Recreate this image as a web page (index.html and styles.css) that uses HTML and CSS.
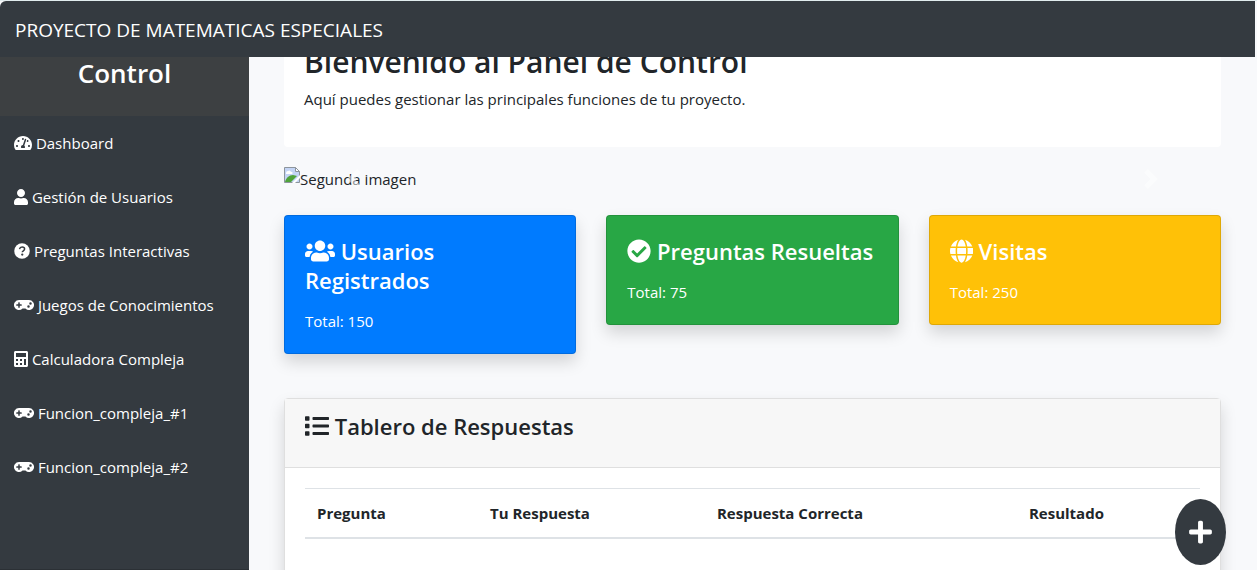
FILE: index.html
```
<!DOCTYPE html>
<html lang="es">
<head>
<meta charset="utf-8">
<title>Proyecto de Matematicas Especiales</title>
<link rel="stylesheet" href="styles.css">
</head>
<body>
<svg class="symbols" aria-hidden="true">
  <symbol id="gamepad" viewBox="0 0 640 512"><path fill-rule="evenodd" d="M480.070 96H160a160 160 0 1 0 114.240 272h91.500A160 160 0 1 0 480.070 96zM248 268a12 12 0 0 1-12 12h-52v52a12 12 0 0 1-12 12h-24a12 12 0 0 1-12-12v-52H84a12 12 0 0 1-12-12v-24a12 12 0 0 1 12-12h52v-52a12 12 0 0 1 12-12h24a12 12 0 0 1 12 12v52h52a12 12 0 0 1 12 12zm216 76a40 40 0 1 1 40-40 40 40 0 0 1-40 40zm64-96a40 40 0 1 1 40-40 40 40 0 0 1-40 40z"/></symbol>
</svg>
<div class="page">
  <header class="topbar"><a class="brand" href="#">PROYECTO DE MATEMATICAS ESPECIALES</a></header>
  <div class="layout">
    <aside class="sidebar">
      <h3 class="sidebar-title">Control</h3>
      <nav class="menu">
        <a href="#"><svg class="icon" viewBox="0 0 576 512"><path fill-rule="evenodd" d="M288 32C128.940 32 0 160.940 0 320c0 52.800 14.250 102.260 39.060 144.800 5.610 9.620 16.300 15.200 27.440 15.200h443c11.140 0 21.830-5.580 27.440-15.200C561.750 422.260 576 372.800 576 320c0-159.060-128.940-288-288-288zm0 64c14.710 0 26.580 10.130 30.320 23.650-1.110 2.260-2.640 4.230-3.450 6.670l-9.220 27.670c-5.130 3.490-10.970 6.010-17.640 6.010-17.670 0-32-14.330-32-32S270.330 96 288 96zM96 384c-17.670 0-32-14.330-32-32s14.330-32 32-32 32 14.330 32 32-14.330 32-32 32zm48-160c-17.670 0-32-14.330-32-32s14.330-32 32-32 32 14.330 32 32-14.330 32-32 32zm246.770-72.410l-61.330 184C343.130 347.330 352 364.540 352 384c0 11.720-3.380 22.550-8.880 32H232.880c-5.500-9.450-8.880-20.280-8.880-32 0-33.940 26.500-61.430 59.900-63.590l61.340-184.010c4.170-12.560 17.730-19.450 30.360-15.170 12.570 4.190 19.350 17.790 15.170 30.360zm14.660 57.200l15.520-46.550c3.470-1.290 7.130-2.230 11.050-2.230 17.670 0 32 14.330 32 32s-14.330 32-32 32c-11.380-.010-20.890-6.280-26.570-15.220zM480 384c-17.670 0-32-14.330-32-32s14.330-32 32-32 32 14.330 32 32-14.330 32-32 32z"/></svg> Dashboard</a>
        <a href="#"><svg class="icon" viewBox="0 0 448 512"><path d="M224 256c70.700 0 128-57.300 128-128S294.700 0 224 0 96 57.300 96 128s57.300 128 128 128zm89.600 32h-16.700c-22.200 10.200-46.900 16-72.900 16s-50.600-5.800-72.900-16h-16.700C60.200 288 0 348.200 0 422.400V464c0 26.500 21.500 48 48 48h352c26.500 0 48-21.500 48-48v-41.600c0-74.200-60.200-134.400-134.400-134.400z"/></svg> Gestión de Usuarios</a>
        <a href="#"><svg class="icon" viewBox="0 0 512 512"><circle cx="256" cy="256" r="248"/><path class="cut" d="M176 196c10-44 44-66 83-66 47 0 80 28 80 65 0 55-73 54-73 96v8" stroke-width="48"/><circle class="cut-fill" cx="264" cy="370" r="37"/></svg> Preguntas Interactivas</a>
        <a href="#"><svg class="icon" viewBox="0 0 640 512"><use href="#gamepad"/></svg> Juegos de Conocimientos</a>
        <a href="#"><svg class="icon" viewBox="0 0 448 512"><path fill-rule="evenodd" d="M400 0H48C22 0 0 22 0 48v416c0 26 22 48 48 48h352c26 0 48-22 48-48V48c0-26-22-48-48-48zM64 64h320v128H64zM64 256h64v64H64zM64 384h64v64H64zM192 256h64v64h-64zM192 384h64v64h-64zM320 256h64v192h-64z"/></svg> Calculadora Compleja</a>
        <a href="#"><svg class="icon" viewBox="0 0 640 512"><use href="#gamepad"/></svg> Funcion_compleja_#1</a>
        <a href="#"><svg class="icon" viewBox="0 0 640 512"><use href="#gamepad"/></svg> Funcion_compleja_#2</a>
      </nav>
    </aside>
    <main class="content">
      <section class="welcome">
        <h2>Bienvenido al Panel de Control</h2>
        <p>Aquí puedes gestionar las principales funciones de tu proyecto.</p>
      </section>
      <section class="carousel">
        <div class="slide"><svg class="missing" viewBox="0 0 16 16"><path d="M.5.500h11l4 4v11H.500z" fill="#c3d4f5" stroke="#8d959c"/><path d="M11.500.500v4h4z" fill="#fff" stroke="#8d959c"/><path d="M2 6a2 2 0 0 1 2-2 2 2 0 0 1 3 1 1 1 0 0 1 1 2H2z" fill="#fff"/><path d="M1 15c1-4 4-7 8-7l4 1-6 6z" fill="#4fa33a"/><path d="M8 16l8-8v3l-5 5z" fill="#fff"/></svg>Segunda imagen</div>
        <button class="control prev" aria-label="Anterior"><svg viewBox="0 0 8 8"><path d="M5.250 0l-4 4 4 4 1.500-1.500L4.250 4l2.500-2.500L5.250 0z"/></svg></button>
        <button class="control next" aria-label="Siguiente"><svg viewBox="0 0 8 8"><path d="M2.750 0l-1.500 1.500L3.750 4l-2.500 2.500L2.750 8l4-4-4-4z"/></svg></button>
      </section>
      <section class="stats">
        <article class="stat blue">
          <h4><svg class="icon" viewBox="0 0 640 512"><path d="M96 224c35.300 0 64-28.700 64-64s-28.700-64-64-64-64 28.700-64 64 28.700 64 64 64zm448 0c35.300 0 64-28.700 64-64s-28.700-64-64-64-64 28.700-64 64 28.700 64 64 64zm32 32h-64c-17.600 0-33.500 7.100-45.100 18.600 40.300 22.100 68.900 62 75.100 109.400h66c17.700 0 32-14.300 32-32v-32c0-35.300-28.700-64-64-64zm-256 0c61.900 0 112-50.100 112-112S381.900 32 320 32 208 82.100 208 144s50.100 112 112 112zm76.800 32h-8.300c-20.800 10-43.900 16-68.500 16s-47.600-6-68.500-16h-8.300C179.600 288 128 339.600 128 403.200V432c0 26.500 21.500 48 48 48h288c26.500 0 48-21.500 48-48v-28.800c0-63.600-51.600-115.200-115.200-115.200zm-223.700-13.400C161.500 263.100 145.600 256 128 256H64c-35.300 0-64 28.700-64 64v32c0 17.700 14.300 32 32 32h65.900c6.300-47.400 34.900-87.300 75.200-109.400z"/></svg> Usuarios Registrados</h4>
          <p>Total: 150</p>
        </article>
        <article class="stat green">
          <h4><svg class="icon" viewBox="0 0 512 512"><path fill-rule="evenodd" d="M504 256c0 136.967-111.033 248-248 248S8 392.967 8 256 119.033 8 256 8s248 111.033 248 248zM227.314 387.314l184-184c6.248-6.248 6.248-16.379 0-22.627l-22.627-22.627c-6.248-6.249-16.379-6.249-22.628 0L216 308.118l-70.059-70.059c-6.248-6.248-16.379-6.248-22.628 0l-22.627 22.627c-6.248 6.248-6.248 16.379 0 22.627l104 104c6.249 6.249 16.379 6.249 22.628.001z"/></svg> Preguntas Resueltas</h4>
          <p>Total: 75</p>
        </article>
        <article class="stat yellow">
          <h4><svg class="icon" viewBox="0 0 496 512"><path d="M336.500 160C322 70.700 287.800 8 248 8s-74 62.700-88.500 152h177zM152 256c0 22.200 1.200 43.500 3.300 64h185.300c2.100-20.500 3.300-41.800 3.300-64s-1.200-43.500-3.300-64H155.300c-2.100 20.500-3.300 41.800-3.300 64zm324.700-96c-28.600-67.900-86.500-120.400-158-141.600 24.400 33.800 41.200 84.700 50 141.600h108zM177.200 18.400C105.800 39.600 47.800 92.100 19.300 160h108c8.700-56.900 25.500-107.800 49.900-141.600zM487.400 192H372.700c2.100 21 3.300 42.500 3.300 64s-1.200 43-3.300 64h114.600c5.500-20.500 8.600-41.800 8.600-64s-3.100-43.500-8.500-64zM120 256c0-21.500 1.200-43 3.300-64H8.600C3.200 212.500 0 233.800 0 256s3.200 43.500 8.600 64h114.600c-2-21-3.200-42.500-3.200-64zm39.500 96c14.500 89.300 48.700 152 88.500 152s74-62.700 88.500-152h-177zm159.300 141.600c71.400-21.200 129.400-73.700 158-141.600h-108c-8.800 56.900-25.600 107.800-50 141.600zM19.300 352c28.600 67.900 86.500 120.400 158 141.600-24.400-33.800-41.200-84.700-50-141.600h-108z"/></svg> Visitas</h4>
          <p>Total: 250</p>
        </article>
      </section>
      <section class="board">
        <div class="board-head">
          <h4><svg class="icon" viewBox="0 0 512 512"><path d="M80 368H16a16 16 0 0 0-16 16v64a16 16 0 0 0 16 16h64a16 16 0 0 0 16-16v-64a16 16 0 0 0-16-16zm0-320H16A16 16 0 0 0 0 64v64a16 16 0 0 0 16 16h64a16 16 0 0 0 16-16V64a16 16 0 0 0-16-16zm0 160H16a16 16 0 0 0-16 16v64a16 16 0 0 0 16 16h64a16 16 0 0 0 16-16v-64a16 16 0 0 0-16-16zm416 176H176a16 16 0 0 0-16 16v32a16 16 0 0 0 16 16h320a16 16 0 0 0 16-16v-32a16 16 0 0 0-16-16zm0-320H176a16 16 0 0 0-16 16v32a16 16 0 0 0 16 16h320a16 16 0 0 0 16-16V80a16 16 0 0 0-16-16zm0 160H176a16 16 0 0 0-16 16v32a16 16 0 0 0 16 16h320a16 16 0 0 0 16-16v-32a16 16 0 0 0-16-16z"/></svg> Tablero de Respuestas</h4>
        </div>
        <div class="board-body">
          <table>
            <thead><tr><th class="c1" scope="col">Pregunta</th><th class="c2" scope="col">Tu Respuesta</th><th class="c3" scope="col">Respuesta Correcta</th><th scope="col">Resultado</th></tr></thead>
            <tbody><tr><td colspan="4"></td></tr></tbody>
          </table>
        </div>
      </section>
    </main>
  </div>
</div>
<button class="fab" aria-label="Agregar"><svg viewBox="0 0 448 512"><path d="M416 208H272V64c0-17.670-14.330-32-32-32h-32c-17.670 0-32 14.330-32 32v144H32c-17.670 0-32 14.330-32 32v32c0 17.670 14.330 32 32 32h144v144c0 17.670 14.330 32 32 32h32c17.670 0 32-14.330 32-32V304h144c17.670 0 32-14.330 32-32v-32c0-17.670-14.330-32-32-32z"/></svg></button>
</body>
</html>
```
FILE: styles.css
```
* { box-sizing: border-box; }
body {
  margin: 0;
  background: #f8f9fb;
  color: #212529;
  font: 15px/24px "Open Sans", "Noto Sans", sans-serif;
}
h2, h3, h4, p { margin: 0; }
a { color: inherit; text-decoration: none; }
button { border: 0; padding: 0; cursor: pointer; }
.symbols { position: absolute; width: 0; height: 0; }
.icon { height: 1em; fill: currentColor; vertical-align: -2px; }

.page {
  height: 100vh;
  display: flex;
  flex-direction: column;
  overflow: hidden;
  padding-right: 2px;
  border-top: 1px solid #e1ecee;
}
.topbar {
  flex: none;
  height: 56px;
  display: flex;
  align-items: center;
  padding: 2px 15px 0;
  background: #343a40;
  color: #fff;
  border-top-left-radius: 6px;
  z-index: 1;
}
.brand { font-size: 19px; }
.layout { flex: 1; display: flex; min-height: 0; }

.sidebar {
  flex: none;
  width: 249px;
  background: #343a40;
  color: #fff;
  border-bottom: 1px solid #2b3035;
}
.sidebar-title {
  height: 59px;
  background: #3d4042;
  font-size: 26px;
  line-height: 32px;
  font-weight: 600;
  text-align: center;
}
.menu a { display: block; padding: 15px 14px; white-space: nowrap; }
.menu .icon { height: 16px; }
.cut { fill: none; stroke: #343a40; }
.cut-fill { fill: #343a40; }

.content { flex: 1; min-width: 0; padding: 0 34px 0 35px; overflow: hidden; }
.welcome {
  margin-top: -36px;
  padding: 22px 20px 36px;
  background: #fff;
  border-radius: 4px;
}
.welcome h2 { font-size: 30px; line-height: 38px; font-weight: 600; margin-bottom: 6px; }

.carousel { position: relative; margin: 20px 0 24px; }
.slide { display: flex; }
.missing { width: 16px; height: 16px; }
.control {
  position: absolute;
  top: 0;
  bottom: 0;
  width: 15%;
  display: flex;
  align-items: center;
  justify-content: center;
  background: none;
  opacity: 0.5;
}
.control svg { width: 20px; height: 20px; fill: #fff; }
.prev { left: 0; }
.next { right: 0; }

.stats { display: grid; grid-template-columns: repeat(3, 1fr); gap: 30px; align-items: start; }
.stat {
  padding: 21px 20px 20px;
  border: 1px solid rgba(0, 0, 0, 0.125);
  border-radius: 4px;
  color: #fff;
  box-shadow: 0 8px 16px rgba(0, 0, 0, 0.15);
}
.stat h4, .board h4 { font-size: 22px; line-height: 29px; font-weight: 600; }
.stat h4 { margin-bottom: 14px; }
.stat .icon, .board .icon { height: 24px; vertical-align: -3px; }
.blue { background: #007bff; }
.green { background: #28a745; }
.yellow { background: #ffc107; }

.board {
  margin-top: 44px;
  border: 1px solid #dfdfdf;
  border-radius: 4px;
  background: #fff;
  box-shadow: 0 8px 16px rgba(0, 0, 0, 0.15);
}
.board-head { padding: 13px 20px 26px; background: #f7f7f7; border-bottom: 1px solid #dfdfdf; }
.board-body { padding: 20px; }
table { width: 100%; border-collapse: collapse; }
th {
  padding: 12px;
  text-align: left;
  font-weight: 700;
  border-top: 1px solid #dee2e6;
  border-bottom: 2px solid #dee2e6;
}
td { height: 48px; }
.c1 { width: 19.33%; }
.c2 { width: 25.36%; }
.c3 { width: 34.86%; }

.fab {
  position: fixed;
  right: 31px;
  bottom: 5px;
  z-index: 2;
  padding: 20px 14px;
  border-radius: 50%;
  background: #343a40;
  color: #fff;
}
.fab svg { display: block; width: 23px; height: 26px; fill: currentColor; }
```
